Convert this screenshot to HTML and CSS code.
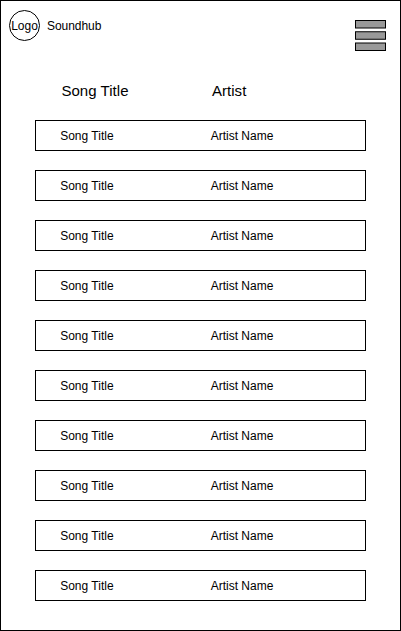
FILE: index.html
```html
<!DOCTYPE html>
<html lang="en">
<head>
<meta charset="utf-8">
<title>Soundhub</title>
<link rel="stylesheet" href="styles.css">
</head>
<body>
<div class="app">
  <header class="header">
    <div class="logo"><span>Logo</span></div>
    <span class="brand">Soundhub</span>
    <svg class="menu" width="31" height="31" viewBox="0 0 31 31">
      <rect x="0.5" y="0.5" width="30" height="7.5"/>
      <rect x="0.5" y="11.75" width="30" height="7.5"/>
      <rect x="0.5" y="23" width="30" height="7.5"/>
    </svg>
  </header>
  <main class="songs">
    <div class="columns"><span>Song Title</span><span>Artist</span></div>
    <div class="row"><span>Song Title</span><span>Artist Name</span></div>
    <div class="row"><span>Song Title</span><span>Artist Name</span></div>
    <div class="row"><span>Song Title</span><span>Artist Name</span></div>
    <div class="row"><span>Song Title</span><span>Artist Name</span></div>
    <div class="row"><span>Song Title</span><span>Artist Name</span></div>
    <div class="row"><span>Song Title</span><span>Artist Name</span></div>
    <div class="row"><span>Song Title</span><span>Artist Name</span></div>
    <div class="row"><span>Song Title</span><span>Artist Name</span></div>
    <div class="row"><span>Song Title</span><span>Artist Name</span></div>
    <div class="row"><span>Song Title</span><span>Artist Name</span></div>
  </main>
</div>
</body>
</html>
```
FILE: styles.css
```css
* {
  box-sizing: border-box;
}

body {
  margin: 0;
  background: #fff;
  color: #000;
  font-family: "Liberation Sans", Arial, sans-serif;
  font-size: 12px;
  line-height: 14px;
}

.app {
  width: 401px;
  height: 631px;
  border: 1px solid #000;
}

.header {
  display: flex;
  align-items: flex-start;
  height: 76px;
  padding: 9px 14px 0 8px;
}

.logo {
  display: flex;
  align-items: center;
  justify-content: center;
  width: 31px;
  height: 31px;
  border: 1px solid #000;
  border-radius: 50%;
}

.brand {
  margin: 9px 0 0 7px;
  letter-spacing: -0.05px;
}

.menu {
  margin: 10px 0 0 auto;
}

.menu rect {
  fill: #999;
  stroke: #000;
}

.songs {
  display: flex;
  flex-direction: column;
  gap: 19px;
  padding: 0 34px;
}

.columns,
.row {
  display: grid;
  grid-template-columns: 150.5px 1fr;
  align-items: center;
}

.columns {
  height: 24px;
  padding: 4px 0 0 26.4px;
  font-size: 15px;
  line-height: 18px;
  letter-spacing: 0.05px;
}

.row {
  height: 31px;
  padding-left: 24.2px;
  border: 1px solid #000;
}
```
